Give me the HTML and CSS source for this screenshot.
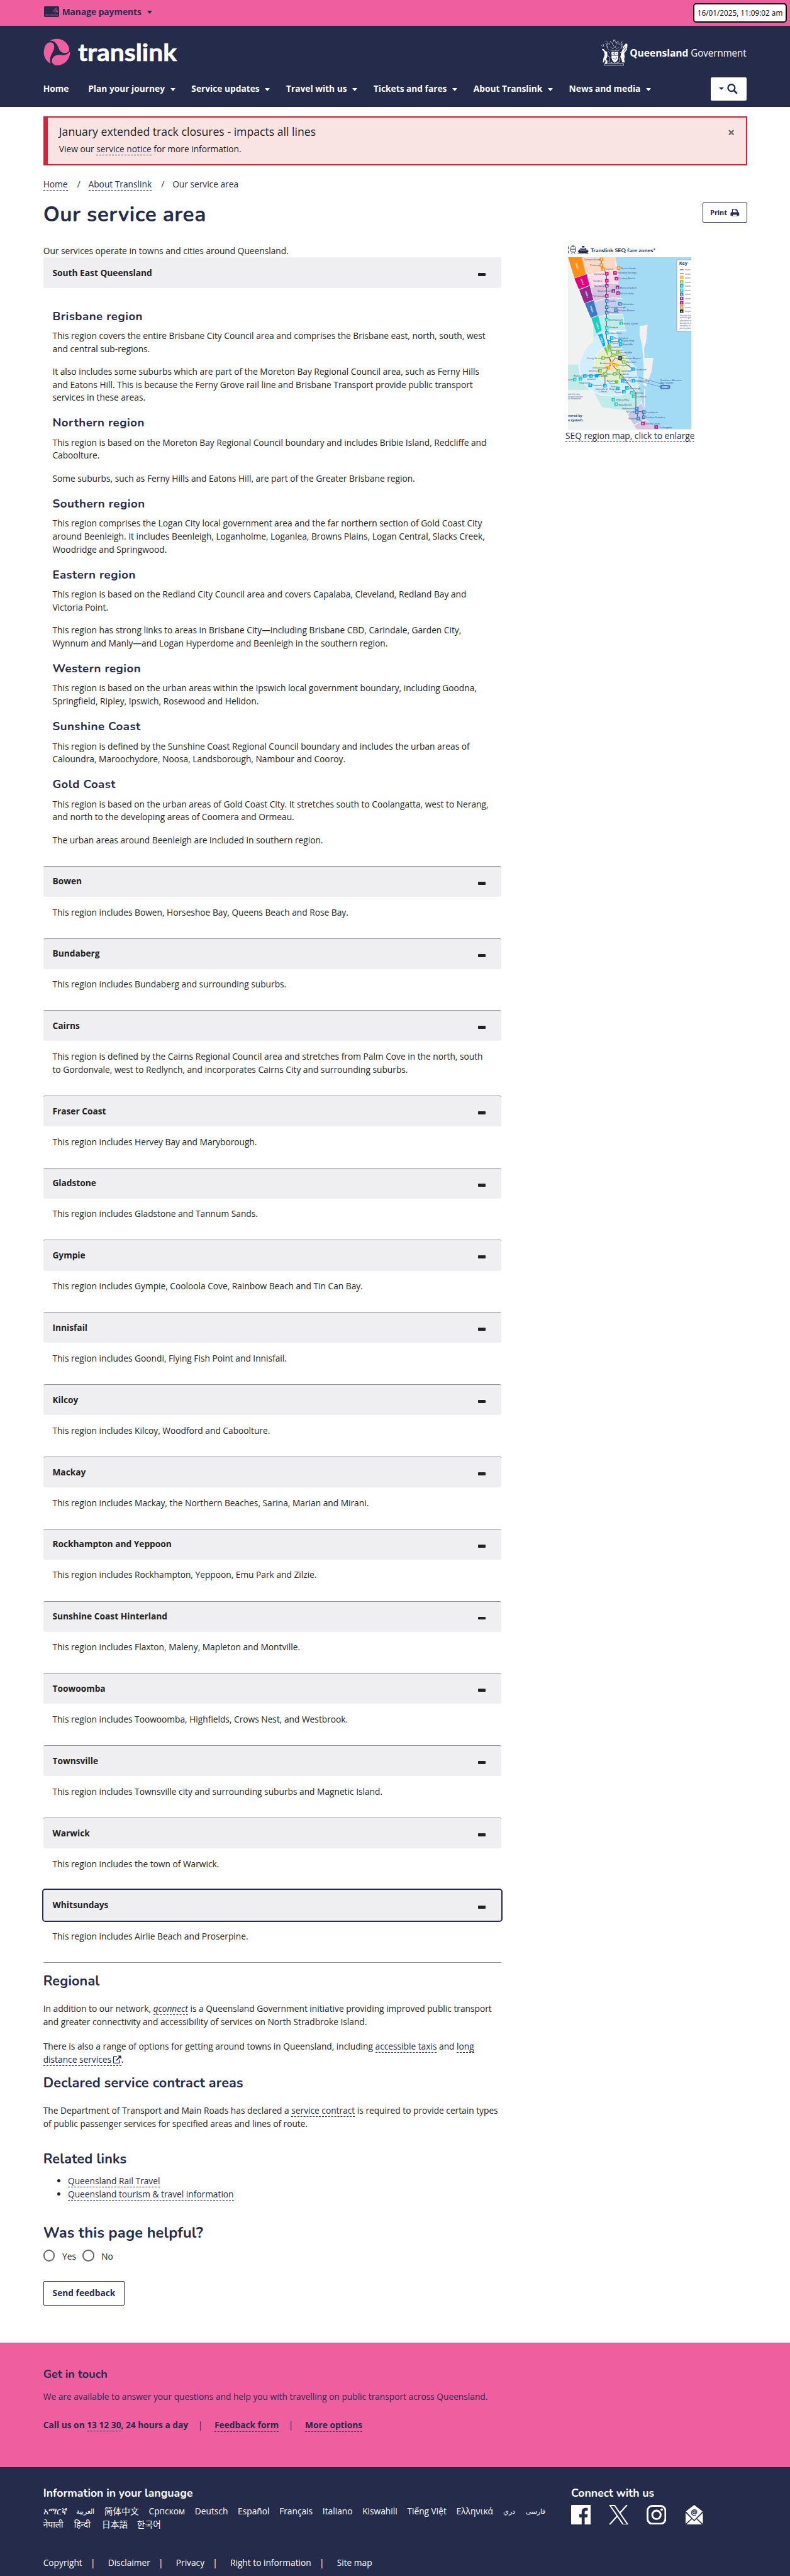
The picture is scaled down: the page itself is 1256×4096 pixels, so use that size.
FILE: index.html
```html
<!DOCTYPE html>
<html lang="en">
<head>
<meta charset="utf-8">
<title>Our service area | Translink</title>
<link rel="stylesheet" href="styles.css">
</head>
<body>
<div class="topbar">
  <div class="wrap topbar-in">
    <svg class="card-icon" viewBox="0 0 25 18"><rect x="0" y="0" width="24.5" height="17.4" rx="2" fill="#252b4b"/><path d="M2 14.2h6.500M9.500 14.200h13" stroke="#ef5fa0" stroke-width=".8"/><path d="M15.500 8.500a4 4 0 0 1 6.500-3M17 9.500a3 3 0 0 1 5-2M19 9.800a2 2 0 0 1 1.500-1.500M17 4.500a5 5 0 0 1 3.500-1.500M20.500 9.800v-1M22 9.800v-2" fill="none" stroke="#ef5fa0" stroke-width=".8"/></svg>
    <span class="manage">Manage payments</span><i class="caret dark"></i>
  </div>
  <div class="clock">16/01/2025, 11:09:02 am</div>
</div>
<header class="header">
  <div class="wrap">
    <div class="brand-row">
      <svg class="logo" viewBox="0 0 220 44">
        <g fill="#ef5fa0">
          <path d="M10.500 3.500C18-.8 31-1 38 8.500C44 17 42.500 22 38 23.300C33 24.500 27.500 23 25 16.500C22.500 9.500 19 3.700 10.500 3.500Z"/>
          <path d="M43.200 21C43.500 33 35 43.300 23.500 43.600C15 44 12.500 38 14.500 33C17 27 24 26.500 29 27C35.500 27.800 40 26 43.200 21Z"/>
          <path d="M11.700 40.800C3 36.500-1 27 1.300 17C3 8.500 9 4.500 14 7C18.500 9.500 18 15.500 16.500 19C14 25 8.500 31 11.700 40.800Z"/>
        </g>
        <text x="56" y="37" textLength="160" lengthAdjust="spacingAndGlyphs" class="logo-text">translink</text>
      </svg>
      <svg class="qld" viewBox="0 0 237 44">
        <g fill="#fff">
          <path d="M2 17l3 .5 3 3.500 2.500 1 .5 7-2 4 2 6-1.500 2H6.500l1.500-3-1-4-2 5H3.500l1-7 2-5-1-5.500-3-3z"/>
          <path d="M43.500 10l-1 8-4.500 6.500 1 5-1 4 1 5.500h-4l-1-4-2-5 1-6 2-5 1-5 5-6z"/>
          <path d="M17.500 22h11v8c0 5-3 8-5.500 9-2.500-1-5.500-4-5.500-9z"/>
        </g>
        <g fill="none" stroke="#252b4b" stroke-width="1"><path d="M17 27.500h12M23 22v5.500M20 31.500l2.500 2.500M26 31l-2 3M19.500 24.500h2M25 24.500h2M36 18l4-5M37.500 21l4.500-6"/></g>
        <g fill="none" stroke="#fff" stroke-width=".8">
          <path d="M6 41h31M5.500 43.400h32M6 41v2.400M37 41v2.400"/>
          <path d="M14 19c-4-2-5-8-3-12l3 3 2-5 3 4 3-7 3 6 3-4 2 6 4-4c2 5 0 11-4 13M16 14l4 3 3-4 3 4 4-3M16 19.500h14M19 9l3 4M27 8l-3 5M8 8l3 2M35 9l-3 2M20 3h5M12 13l-3-1M33 14l3-1M8 4l3 2M34 4l2 2M1 11l3 3M4 9l1 5" stroke-dasharray="1.600 .8"/>
          <path d="M12 28l3 4-1 6 6 2M33 29l-3 4 1 5-6 2M14 39l-4-3M15 24l-3-3M31 24l3-3M22 40l1-1.500 1 1.500" stroke-dasharray="2 .7"/>
        </g>
        <text x="47" y="29.500" textLength="95" lengthAdjust="spacingAndGlyphs" class="qld-b">Queensland</text>
        <text x="146" y="29.500" textLength="90" lengthAdjust="spacingAndGlyphs" class="qld-r">Government</text>
      </svg>
    </div>
    <div class="nav-row">
      <nav class="nav">
        <a class="n0">Home</a>
        <a>Plan your journey<i class="caret"></i></a>
        <a>Service updates<i class="caret"></i></a>
        <a>Travel with us<i class="caret"></i></a>
        <a>Tickets and fares<i class="caret"></i></a>
        <a>About Translink<i class="caret"></i></a>
        <a>News and media<i class="caret"></i></a>
      </nav>
      <div class="search"><i class="caret dark small"></i><svg class="mag" viewBox="0 0 17 17"><circle cx="7" cy="6.800" r="5.500" fill="none" stroke="#252b4b" stroke-width="2.400"/><path d="M11 11l4.300 4.300" stroke="#252b4b" stroke-width="2.800" stroke-linecap="round"/></svg></div>
    </div>
  </div>
</header>
<main class="wrap">
  <div class="alert">
    <div>
      <div class="alert-title">January extended track closures - impacts all lines</div>
      <div>View our <a class="lk">service notice</a> for more information.</div>
    </div>
    <svg class="close" viewBox="0 0 10 10"><path d="M1 1l8 8M9 1l-8 8" stroke="#666" stroke-width="2.400"/></svg>
  </div>
  <div class="crumbs"><a class="lk">Home</a><span>/</span><a class="lk">About Translink</a><span>/</span>Our service area</div>
  <div class="title-row">
    <h1>Our service area</h1>
    <div class="print">Print<svg viewBox="0 0 15 13"><path d="M3.500 6V1h6l2 2v3" fill="none" stroke="#252b4b" stroke-width="1.300"/><path d="M9.300 1v2.500h2.200" fill="none" stroke="#252b4b"/><path d="M2 5.700h11a1.500 1.500 0 0 1 1.500 1.500V11H.5V7.200A1.500 1.500 0 0 1 2 5.700z" fill="#252b4b"/><rect x="3.500" y="9" width="8" height="3.400" fill="#fff" stroke="#252b4b" stroke-width="1.200"/></svg></div>
  </div>
  <div class="cols">
    <div class="left">
      <div>Our services operate in towns and cities around Queensland.</div>
      <section class="acc first"><div class="bar">South East Queensland<i></i></div>
        <div class="body">
          <h3>Brisbane region</h3>
          <p>This region covers the entire Brisbane City Council area and comprises the Brisbane east, north, south, west<br>and central sub-regions.</p>
          <p>It also includes some suburbs which are part of the Moreton Bay Regional Council area, such as Ferny Hills<br>and Eatons Hill. This is because the Ferny Grove rail line and Brisbane Transport provide public transport<br>services in these areas.</p>
          <h3>Northern region</h3>
          <p>This region is based on the Moreton Bay Regional Council boundary and includes Bribie Island, Redcliffe and<br>Caboolture.</p>
          <p>Some suburbs, such as Ferny Hills and Eatons Hill, are part of the Greater Brisbane region.</p>
          <h3>Southern region</h3>
          <p>This region comprises the Logan City local government area and the far northern section of Gold Coast City<br>around Beenleigh. It includes Beenleigh, Loganholme, Loganlea, Browns Plains, Logan Central, Slacks Creek,<br>Woodridge and Springwood.</p>
          <h3>Eastern region</h3>
          <p>This region is based on the Redland City Council area and covers Capalaba, Cleveland, Redland Bay and<br>Victoria Point.</p>
          <p>This region has strong links to areas in Brisbane City—including Brisbane CBD, Carindale, Garden City,<br>Wynnum and Manly—and Logan Hyperdome and Beenleigh in the southern region.</p>
          <h3>Western region</h3>
          <p>This region is based on the urban areas within the Ipswich local government boundary, including Goodna,<br>Springfield, Ripley, Ipswich, Rosewood and Helidon.</p>
          <h3>Sunshine Coast</h3>
          <p>This region is defined by the Sunshine Coast Regional Council boundary and includes the urban areas of<br>Caloundra, Maroochydore, Noosa, Landsborough, Nambour and Cooroy.</p>
          <h3>Gold Coast</h3>
          <p>This region is based on the urban areas of Gold Coast City. It stretches south to Coolangatta, west to Nerang,<br>and north to the developing areas of Coomera and Ormeau.</p>
          <p>The urban areas around Beenleigh are included in southern region.</p>
        </div></section>
      <section class="acc"><div class="bar">Bowen<i></i></div><div class="body"><p>This region includes Bowen, Horseshoe Bay, Queens Beach and Rose Bay.</p></div></section>
      <section class="acc"><div class="bar">Bundaberg<i></i></div><div class="body"><p>This region includes Bundaberg and surrounding suburbs.</p></div></section>
      <section class="acc"><div class="bar">Cairns<i></i></div><div class="body"><p>This region is defined by the Cairns Regional Council area and stretches from Palm Cove in the north, south<br>to Gordonvale, west to Redlynch, and incorporates Cairns City and surrounding suburbs.</p></div></section>
      <section class="acc"><div class="bar">Fraser Coast<i></i></div><div class="body"><p>This region includes Hervey Bay and Maryborough.</p></div></section>
      <section class="acc"><div class="bar">Gladstone<i></i></div><div class="body"><p>This region includes Gladstone and Tannum Sands.</p></div></section>
      <section class="acc"><div class="bar">Gympie<i></i></div><div class="body"><p>This region includes Gympie, Cooloola Cove, Rainbow Beach and Tin Can Bay.</p></div></section>
      <section class="acc"><div class="bar">Innisfail<i></i></div><div class="body"><p>This region includes Goondi, Flying Fish Point and Innisfail.</p></div></section>
      <section class="acc"><div class="bar">Kilcoy<i></i></div><div class="body"><p>This region includes Kilcoy, Woodford and Caboolture.</p></div></section>
      <section class="acc"><div class="bar">Mackay<i></i></div><div class="body"><p>This region includes Mackay, the Northern Beaches, Sarina, Marian and Mirani.</p></div></section>
      <section class="acc"><div class="bar">Rockhampton and Yeppoon<i></i></div><div class="body"><p>This region includes Rockhampton, Yeppoon, Emu Park and Zilzie.</p></div></section>
      <section class="acc"><div class="bar">Sunshine Coast Hinterland<i></i></div><div class="body"><p>This region includes Flaxton, Maleny, Mapleton and Montville.</p></div></section>
      <section class="acc"><div class="bar">Toowoomba<i></i></div><div class="body"><p>This region includes Toowoomba, Highfields, Crows Nest, and Westbrook.</p></div></section>
      <section class="acc"><div class="bar">Townsville<i></i></div><div class="body"><p>This region includes Townsville city and surrounding suburbs and Magnetic Island.</p></div></section>
      <section class="acc"><div class="bar">Warwick<i></i></div><div class="body"><p>This region includes the town of Warwick.</p></div></section>
      <section class="acc focus"><div class="bar">Whitsundays<i></i></div><div class="body"><p>This region includes Airlie Beach and Proserpine.</p></div></section>
      <div class="rule"></div>
      <h2 class="h-reg">Regional</h2>
      <div class="para">In addition to our network, <a class="lk"><em>qconnect</em></a> is a Queensland Government initiative providing improved public transport<br>and greater connectivity and accessibility of services on North Stradbroke Island.</div>
      <div class="para">There is also a range of options for getting around towns in Queensland, including <a class="lk">accessible taxis</a> and <a class="lk">long</a><br><a class="lk">distance services<svg class="ext" viewBox="0 0 14 14"><path d="M7 2H2.500A1 1 0 0 0 1.500 3v8.500a1 1 0 0 0 1 1h8a1 1 0 0 0 1-1V7" fill="none" stroke="#252b4b" stroke-width="1.300"/><path d="M6 8.500l6-6" stroke="#252b4b" stroke-width="1.800"/><path d="M8.500.5H14V6z" fill="#252b4b"/></svg></a>.</div>
      <h2 class="h-dec">Declared service contract areas</h2>
      <div class="para">The Department of Transport and Main Roads has declared a <a class="lk">service contract</a> is required to provide certain types<br>of public passenger services for specified areas and lines of route.</div>
      <h2 class="h-rel">Related links</h2>
      <ul><li><a class="lk">Queensland Rail Travel</a></li><li><a class="lk">Queensland tourism &amp; travel information</a></li></ul>
      <h2 class="h-was">Was this page helpful?</h2>
      <div class="radios"><i></i><span>Yes</span><i></i><span>No</span></div>
      <div class="send">Send feedback</div>
    </div>
    <aside class="right">
      <svg class="map" viewBox="60 50 600 898">
        <g fill="none" stroke="#252b4b" stroke-width="3">
          <path d="M62 58v14M62 80v12"/>
          <rect x="74" y="60" width="22" height="26" rx="5"/><path d="M74 72h22M80 56h10M76 94l4-7M94 94l-4-7"/>
        </g>
        <g fill="#252b4b"><path d="M120 66h28v8h8v8H112v-8h8zM128 56h12v8h-12zM107 80h54l-6 10H112z"/><path d="M107 93q7-4 13 0t13 0 13 0 14 0" fill="none" stroke="#252b4b" stroke-width="3"/></g>
        <path d="M125 70h18M118 77h32" stroke="#fff" stroke-width="2.500"/>
        <text x="170" y="87" textLength="316" lengthAdjust="spacingAndGlyphs" class="map-title">Translink SEQ fare zones*</text>
        <svg x="60" y="111" width="600" height="837" viewBox="60 111 600 837">
          <rect x="60" y="111" width="600" height="837" fill="#a3dbf5"/>
          <path d="M60 111H290L305 180 303 300 290 380 330 400 340 470 295 470 315 540 320 600 350 640 380 660 400 720 410 780 430 850 440 900 480 948H60z" fill="#f0f2f2"/>
          <path d="M120 111H292L290 150 304 190Q220 175 156 195z" fill="#fdd9c5"/>
          <path d="M156 195Q225 175 303 190L305 240Q240 232 171 253z" fill="#fbdce9"/>
          <path d="M171 253Q240 232 305 240L305 316Q245 306 186 326z" fill="#d9c3e0"/>
          <path d="M186 326Q245 306 303 316L325 345 325 392Q260 384 207 404z" fill="#c2d0ea"/>
          <path d="M183 410Q250 384 328 392L330 440 345 468Q280 462 222 486L183 500z" fill="#c0ebe8"/>
          <path d="M60 633H110Q120 760 240 785 330 795 390 750L415 770 417 820 370 860 225 840 180 755 60 757z" fill="#c0ebe8"/>
          <path d="M183 500Q240 468 295 478L320 545 350 600 395 650 400 745Q330 795 240 785 120 760 115 650 130 560 183 520z" fill="#d3eefb"/>
          <circle cx="270" cy="630" r="83" fill="#e2f1c9"/><circle cx="271" cy="630" r="36" fill="#fbe3c2"/>
          <path d="M350 875L417 820 430 850 436 900 380 925z" fill="#c5cbe7"/><path d="M380 928L436 900 480 948H395z" fill="#dcc3e2"/>
          <g fill="none" stroke="#fff" stroke-width="3"><path d="M150 208Q210 172 304 178M163 262Q230 230 305 238M177 334Q245 300 325 312M198 404Q265 382 328 390M213 484Q260 462 345 470M115 640Q115 760 240 785 350 795 417 720M187 630A83 83 0 0 0 353 650M187 630Q190 570 240 552M380 928L440 898M352 872L417 820"/></g>
          <path d="M408 446L447 440 440 520 430 555 432 600H425L420 540 408 490zM425 600L475 600 465 670 440 740 425 730 428 640zM430 750h6l-2 90h-4z" fill="#f0f2f2"/>
          <path d="M60 111H126L147 193 91 212z" fill="#ff9015"/><path d="M91 214L151 194 164 248 113 267z" fill="#e6007e"/><path d="M115 270L166 250 183 318 140 335z" fill="#92278f"/><path d="M142 336L185 321 204 392 171 406z" fill="#3a7bc8"/><path d="M174 408L207 396 224 466 199 482z" fill="#16cfc5"/><path d="M206 488L227 482 242 540 231 547z" fill="#00aeef"/><path d="M234 552L246 547 258 598z" fill="#7ac943"/>
          <g fill="none" stroke="#555" stroke-width="3"><path d="M222 123V150L248 192V505L262 545 275 585 262 600 270 627 240 678 140 690M240 678V735M270 627L258 655M231 600H262L270 627L390 770V850L402 895 424 920M390 862H428V888M270 627L290 600 330 620 375 655M262 522H312M270 627H290"/></g>
          <path d="M405 695L525 730M412 715L525 745" stroke="#3a7bc8" stroke-width="2"/><rect x="507" y="732" width="50" height="20" rx="10" fill="#3a7bc8"/>
          <g class="mk">
            <g fill="#ff9015"><rect x="214" y="113"/><rect x="214" y="141"/><rect x="222" y="160"/><rect x="297" y="155"/></g>
            <g fill="#e6007e"><rect x="240" y="183"/><rect x="280" y="179"/><rect x="240" y="217"/><rect x="287" y="206"/><rect x="480" y="928"/></g>
            <g fill="#92278f"><rect x="240" y="241"/><rect x="292" y="249"/><rect x="272" y="267"/><rect x="295" y="277"/><rect x="240" y="291"/><rect x="416" y="911"/></g>
            <g fill="#3a7bc8"><rect x="240" y="315"/><rect x="304" y="329"/><rect x="240" y="345"/><rect x="284" y="360"/><rect x="240" y="371"/><rect x="386" y="838"/><rect x="386" y="855"/><rect x="420" y="855"/><rect x="420" y="880"/><rect x="393" y="887"/></g>
            <g fill="#16cfc5"><rect x="240" y="405"/><rect x="310" y="424"/><rect x="240" y="445"/><rect x="84" y="697"/><rect x="112" y="695"/><rect x="361" y="761"/><rect x="371" y="779"/><rect x="272" y="795"/><rect x="285" y="817"/></g>
            <g fill="#00aeef"><rect x="240" y="469"/><rect x="264" y="495"/><rect x="252" y="513"/><rect x="304" y="509"/><rect x="307" y="526"/><rect x="367" y="647"/><rect x="133" y="680"/><rect x="163" y="680"/><rect x="190" y="679"/><rect x="159" y="725"/><rect x="231" y="727"/><rect x="293" y="740"/><rect x="338" y="738"/><rect x="323" y="756"/><rect x="317" y="704"/><rect x="369" y="703"/></g>
            <g fill="#7ac943"><rect x="251" y="535"/><rect x="252" y="552"/><rect x="293" y="566"/><rect x="270" y="578"/><rect x="222" y="592"/><rect x="322" y="612"/><rect x="207" y="655"/><rect x="297" y="655"/><rect x="231" y="669"/><rect x="279" y="670"/><rect x="308" y="684"/><rect x="288" y="709"/></g>
            <g fill="#fbb829"><rect x="262" y="618"/><rect x="283" y="628"/><rect x="247" y="640"/></g>
            <rect x="305" y="592" fill="#222"/>
          </g>
          <g class="mn">
            <text x="219" y="127">8</text><text x="219" y="155">8</text><text x="227" y="174">8</text><text x="302" y="169">8</text><text x="245" y="197">7</text><text x="285" y="193">7</text><text x="245" y="231">7</text><text x="292" y="220">7</text><text x="485" y="942">7</text><text x="245" y="255">6</text><text x="297" y="263">6</text><text x="277" y="281">6</text><text x="300" y="291">6</text><text x="245" y="305">6</text><text x="421" y="925">6</text><text x="245" y="329">5</text><text x="309" y="343">5</text><text x="245" y="359">5</text><text x="289" y="374">5</text><text x="245" y="385">5</text><text x="391" y="852">5</text><text x="391" y="869">5</text><text x="425" y="869">5</text><text x="425" y="894">5</text><text x="398" y="901">5</text><text x="245" y="419">4</text><text x="315" y="438">4</text><text x="245" y="459">4</text><text x="89" y="711">4</text><text x="117" y="709">4</text><text x="366" y="775">4</text><text x="376" y="793">4</text><text x="277" y="809">4</text><text x="290" y="831">4</text><text x="245" y="483">3</text><text x="269" y="509">3</text><text x="257" y="527">3</text><text x="309" y="523">3</text><text x="312" y="540">3</text><text x="372" y="661">3</text><text x="138" y="694">3</text><text x="168" y="694">3</text><text x="164" y="739">3</text><text x="236" y="741">3</text><text x="298" y="754">3</text><text x="343" y="752">3</text><text x="328" y="770">3</text><text x="322" y="718">3</text><text x="374" y="717">3</text><text x="257" y="566">2</text><text x="298" y="580">2</text><text x="275" y="592">2</text><text x="227" y="606">2</text><text x="327" y="626">2</text><text x="212" y="669">2</text><text x="302" y="669">2</text><text x="236" y="683">2</text><text x="284" y="684">2</text><text x="313" y="698">2</text><text x="267" y="632">1</text><text x="288" y="642">1</text><text x="309" y="606">✕</text>
          </g>
          <g class="ml">
            <text x="138" y="127">Gympie North</text><text x="167" y="155">Pomona</text><text x="241" y="173">Cooroy</text><text x="316" y="168">Noosa Heads</text><text x="188" y="196">Eumundi</text><text x="300" y="192">Peregian Springs</text><text x="306" y="219">Coolum Beach</text><text x="182" y="230">Yandina</text><text x="186" y="255">Nambour</text><text x="312" y="263">Maroochydore</text><text x="204" y="280">Sippy Downs</text><text x="314" y="291">Mooloolaba</text><text x="178" y="304">Palmwoods</text><text x="261" y="328">Eudlo</text><text x="322" y="343">Caloundra</text><text x="261" y="358">Landsborough</text><text x="302" y="374">Pelican Waters</text><text x="259" y="384">Beerwah</text><text x="259" y="419">Beerburrum</text><text x="330" y="438">Bribie Island</text><text x="259" y="458">Elimbah</text><text x="259" y="483">Caboolture</text><text x="284" y="508">North Lakes</text><text x="322" y="522">Kippa-Ring</text><text x="327" y="539">Redcliffe</text><text x="272" y="534">Petrie</text><text x="270" y="550">Lawnton</text><text x="270" y="566">Strathpine</text><text x="311" y="579">Shorncliffe</text><text x="288" y="592">Northgate</text><text x="155" y="605">Ferny Grove</text><text x="323" y="606">Brisbane Airport</text><text x="341" y="625">Wynnum</text><text x="215" y="630">Brisbane</text><text x="301" y="641">Coorparoo</text><text x="180" y="653">Indooroopilly</text><text x="386" y="661">Cleveland</text><text x="160" y="667">Kenmore</text><text x="315" y="669">Capalaba</text><text x="249" y="682">Darra</text><text x="294" y="684">Sunnybank</text><text x="87" y="692">Walloon</text><text x="204" y="693">Redbank</text><text x="152" y="707">Ipswich</text><text x="327" y="698">Springwood</text><text x="60" y="710">ood</text><text x="112" y="725">Thagoona</text><text x="249" y="717">Browns</text><text x="257" y="729">Plains</text><text x="336" y="713">Daisy</text><text x="336" y="725">Hill</text><text x="387" y="717">Redland Bay</text><text x="178" y="739">Yamanto</text><text x="193" y="757">Springfield</text><text x="210" y="769">Central</text><text x="267" y="745">Park</text><text x="261" y="757">Ridge</text><text x="358" y="752">Beenleigh</text><text x="286" y="770">Yatala</text><text x="381" y="775">Ormeau</text><text x="390" y="792">Coomera</text><text x="292" y="809">Jimboomba</text><text x="306" y="832">Beaudesert</text><text x="323" y="851">Helensvale</text><text x="342" y="867">Nerang</text><text x="440" y="868">Southport</text><text x="440" y="894">Surfers Paradise</text><text x="354" y="900">Robina</text><text x="436" y="924">Varsity Lakes</text><text x="500" y="942">Coolangatta</text><text x="509" y="713">Southern Moreton</text><text x="509" y="727">Bay Islands</text>
          </g>
          <g class="mnote"><text x="60" y="782">mbs. For more</text><text x="60" y="792">the zones and bus</text><text x="60" y="802">ou/Toowoomba</text></g>
          <g class="mbold"><text x="60" y="889">vered by</text><text x="60" y="910">e system.</text></g>
          <g class="mz"><text transform="translate(96 140) rotate(72)">ZONE 8</text><text transform="translate(121 217) rotate(72)">ZONE 7</text><text transform="translate(143 278) rotate(72)">ZONE 6</text><text transform="translate(167 349) rotate(72)">ZONE 5</text><text transform="translate(195 430) rotate(72)">ZONE 4</text><text transform="translate(216 498) rotate(72)">ZONE 3</text><text x="516" y="746">ZONE 5</text></g>
          <path d="M589 124H670V470H589z" fill="#fff" stroke="#888" stroke-width="2"/>
          <text x="600" y="149" class="mkey">Key</text>
          <path d="M604 172h18M604 191h18" stroke="#444" stroke-width="3"/>
          <g class="mk"><rect x="604" y="201" fill="#fbb829"/><rect x="604" y="222" fill="#7ac943"/><rect x="604" y="242" fill="#00aeef"/><rect x="604" y="263" fill="#16cfc5"/><rect x="604" y="283" fill="#3a7bc8"/><rect x="604" y="303" fill="#92278f"/><rect x="604" y="324" fill="#e6007e"/><rect x="604" y="344" fill="#ff9015"/><rect x="604" y="365" fill="#222"/></g>
          <g class="mn"><text x="609" y="215">1</text><text x="609" y="236">2</text><text x="609" y="256">3</text><text x="609" y="277">4</text><text x="609" y="297">5</text><text x="609" y="317">6</text><text x="609" y="338">7</text><text x="609" y="358">8</text><text x="608" y="379">✕</text></g>
          <g class="ml"><text x="629" y="176">train line</text><text x="629" y="196">train line</text><text x="629" y="215">zone 1</text><text x="629" y="235">zone 2</text><text x="629" y="256">zone 3</text><text x="629" y="276">zone 4</text><text x="629" y="296">zone 5</text><text x="629" y="317">zone 6</text><text x="629" y="337">zone 7</text><text x="629" y="358">zone 8</text><text x="629" y="378">airport</text></g>
          <g class="mnote"><text x="603" y="397">This map is to be</text><text x="603" y="409">used as a guide</text><text x="603" y="422">information on</text><text x="603" y="435">boundaries, plus</text><text x="603" y="447">timetables or use</text><text x="603" y="460">journey planner</text></g>
        </svg>
      </svg>
      <div><a class="lk">SEQ region map, click to enlarge</a></div>
    </aside>
  </div>
</main>
<section class="touch"><div class="wrap">
  <div class="touch-h">Get in touch</div>
  <div class="touch-p">We are available to answer your questions and help you with travelling on public transport across Queensland.</div>
  <div class="touch-n"><span>Call us on <a class="lk">13 12 30</a>, 24 hours a day</span><b>|</b><a class="lk">Feedback form</a><b>|</b><a class="lk">More options</a></div>
</div></section>
<footer class="foot"><div class="wrap">
  <div class="foot-top">
    <div class="langs">
      <h4>Information in your language</h4>
      <div class="lrow"><span class="w37">አማርኛ</span><span class="w30 ar">العربية</span><span class="w56">简体中文</span><span>Српском</span><span>Deutsch</span><span>Español</span><span>Français</span><span>Italiano</span><span>Kiswahili</span><span>Tiếng Việt</span><span>Ελληνικά</span><span class="w21 ar">دري</span><span class="w31 ar">فارسی</span></div>
      <div class="lrow"><span class="w34">नेपाली</span><span class="w29">हिन्दी</span><span class="w41">日本語</span><span class="w40">한국어</span></div>
    </div>
    <div class="social">
      <h4>Connect with us</h4>
      <div class="icons">
        <svg viewBox="0 0 32 32"><path fill="#fff" d="M1.500 0h29A1.500 1.500 0 0 1 32 1.500v29a1.500 1.500 0 0 1-1.500 1.500H22V20h4.200l.7-5H22v-3c0-1.600.6-2.500 2.600-2.500H27V5.100c-.5-.1-2-.2-3.700-.2-3.800 0-6.200 2.300-6.200 6.300V15H13v5h4.100v12H1.500A1.500 1.500 0 0 1 0 30.500v-29A1.500 1.500 0 0 1 1.500 0z"/></svg>
        <svg viewBox="0 0 32 32"><path fill="none" stroke="#fff" stroke-width="2" d="M2 1h7.500L30.500 31.500H23z"/><path fill="none" stroke="#fff" stroke-width="2.200" d="M29.500 0L17.500 13.500M13.500 18L1 32"/></svg>
        <svg viewBox="0 0 32 32"><g fill="none" stroke="#fff" stroke-width="3"><rect x="1.500" y="1.500" width="29" height="29" rx="8"/><circle cx="16" cy="16" r="6.800"/></g><circle cx="24.500" cy="7.500" r="2" fill="#fff"/></svg>
        <svg viewBox="0 0 32 32"><path d="M16 0L29.500 10.500 16 24.500 2.500 10.500z" fill="#fff"/><path d="M2 12.700L11.300 22 2 30.500zM30 12.700L20.700 22 30 30.500zM12.300 23L16 26.500 19.700 23 29 32H3z" fill="#fff"/><text x="10.500" y="16" class="at">@</text></svg>
      </div>
    </div>
  </div>
  <div class="legal"><a>Copyright</a><b>|</b><a>Disclaimer</a><b>|</b><a>Privacy</a><b>|</b><a>Right to information</a><b>|</b><a>Site map</a></div>
</div></footer>
</body>
</html>
```
FILE: styles.css
```css
/* 1rem is ten layout units */
html { font-size: 9.8155px; }
* { box-sizing: border-box; }
body { margin: 0; background: #fff; color: #222; font: 1.4rem/2.1rem "Open Sans", "Noto Sans", "Noto Sans CJK SC", "Noto Sans CJK KR", sans-serif; overflow-x: hidden; }
p, h1, h2, h3, h4, ul { margin: 0; padding: 0; }
svg { display: block; }
.wrap { margin-left: 7rem; width: 114rem; }
.lk { color: #252b4b; border-bottom: 1px dashed #252b4b; }
.caret { display: inline-block; width: 0; height: 0; border: .5rem solid transparent; border-top: .6rem solid #fff; border-bottom: 0; margin-left: .9rem; vertical-align: .1rem; }
.caret.dark { border-top-color: #252b4b; }
.caret.small { border-width: .5rem .45rem 0; margin: 0; }

.topbar { height: 4.2rem; background: #ef5fa0; position: relative; }
.topbar-in { display: flex; align-items: center; height: 3.9rem; color: #252b4b; }
.card-icon { width: 2.5rem; height: 1.8rem; margin-left: .15rem; margin-right: .4rem; }
.manage { font-weight: 700; }
.clock { position: absolute; right: .5rem; top: .5rem; width: 15.2rem; height: 3.2rem; border: 2px solid #000; border-radius: .5rem; background: #fff; color: #000; font-size: 1.2rem; line-height: 2.8rem; text-align: center; white-space: nowrap; }

.header { background: #252b4b; height: 13.1rem; padding-top: 2rem; color: #fff; }
.brand-row { display: flex; justify-content: space-between; height: 4.4rem; }
.logo { width: 22rem; height: 4.4rem; overflow: visible; }
.logo-text { font: 700 39.5px Lato, sans-serif; fill: #fff; stroke: #fff; stroke-width: .7; stroke-linejoin: round; }
.qld { width: 23.7rem; height: 4.4rem; overflow: visible; }
.qld-b { font: 700 16.4px "Open Sans", sans-serif; fill: #fff; }
.qld-r { font: 400 16.4px "Open Sans", sans-serif; fill: #fff; }
.nav-row { display: flex; justify-content: space-between; align-items: center; height: 3.8rem; margin-top: 1.9rem; }
.nav { display: flex; gap: 2.6rem; font-weight: 700; white-space: nowrap; }
.n0 { margin-right: .55rem; }
.search { width: 5.8rem; height: 3.8rem; margin-right: .1rem; background: #fff; border-radius: 2px; display: flex; align-items: center; justify-content: center; gap: .5rem; }
.mag { width: 1.7rem; height: 1.7rem; }

.alert { margin-top: 1.5rem; height: 8rem; border: 2px solid #e31b38; border-left-width: .8rem; background: #f9e4e3; padding: 1rem 1.85rem 0 1.85rem; display: flex; justify-content: space-between; }
.alert-title { font-size: 1.8rem; line-height: 2.7rem; margin-bottom: .45rem; }
.close { width: .95rem; height: .95rem; margin-top: 1rem; }
.crumbs { margin-top: 2rem; color: #252b4b; }
.crumbs span { margin: 0 1.3rem 0 1.55rem; }
h1, h2, h3, h4, .touch-h { font-family: Nunito, Lato, "Open Sans", sans-serif; color: #252b4b; font-weight: 700; white-space: nowrap; }
.title-row { display: flex; justify-content: space-between; height: 4rem; margin: 1.65rem 0 3.05rem; }
h1 { font-size: 3.4rem; line-height: 4rem; letter-spacing: .045rem; padding-top: .25rem; }
.print { width: 7.2rem; height: 3.3rem; margin-top: .25rem; border: 1px solid #252b4b; border-radius: 2px; color: #252b4b; font-weight: 700; font-size: 1.1rem; display: flex; align-items: center; justify-content: center; gap: .5rem; }
.print svg { width: 1.5rem; height: 1.3rem; }
.cols { display: flex; height: 339.9rem; }
.left { width: 74.2rem; white-space: nowrap; }
.right { margin-left: 10.4rem; white-space: nowrap; }
.bar { height: 5rem; background: #efeff1; border-top: 1px solid #929296; border-radius: 3px; font-weight: 700; padding: 0 2.5rem 0 1.5rem; display: flex; align-items: center; justify-content: space-between; line-height: 2.1rem; }
.first .bar { border-top-color: #efeff1; }
.bar i { width: 1.3rem; height: .5rem; background: #222; border-radius: 1px; margin-top: .5rem; }
.body { padding: 1.5rem 1.5rem; }
.body p { margin-bottom: 1.6rem; }
.body h3 { font-size: 1.9rem; line-height: 2.8rem; letter-spacing: .05rem; margin: 1.6rem 0 .7rem; padding-top: .1rem; }
.focus .bar { outline: 2px solid #252b4b; border-top-color: #efeff1; }
.rule { border-top: 1px solid #929296; }
.left h2 { font-size: 2.2rem; line-height: 2.6rem; letter-spacing: .015rem; }
.left .h-reg { margin-top: 1.8rem; margin-bottom: 2.1rem; }
.para { margin-bottom: 1.9rem; }
.left .h-dec { margin: -.45rem 0 2.15rem; }
.left .h-rel { margin: 3.45rem 0 1.15rem; }
.left .h-was { font-size: 2.4rem; line-height: 3rem; margin: 3.7rem 0 1.2rem; }
.ext { display: inline-block; width: 1.4rem; height: 1.4rem; margin-left: .2rem; vertical-align: -.15rem; }
ul { padding-left: 4rem; }
.radios { display: flex; align-items: center; height: 1.9rem; }
.radios i { width: 1.9rem; height: 1.9rem; border: 2px solid #666; border-radius: 50%; }
.radios span { margin: .5rem 1rem 0 1.2rem; }
.send { width: 13.2rem; height: 4rem; margin-top: 3.2rem; border: 1px solid #252b4b; border-radius: 2px; color: #252b4b; font-weight: 700; display: flex; align-items: center; justify-content: center; }

.map { width: 20rem; height: 29.93rem; margin: .07rem 0 0 .4rem; }
.map-title { font: 700 25px Lato, sans-serif; fill: #252b4b; }
.mk rect { width: 17px; height: 17px; }
.mn { font: 700 13px "Open Sans", sans-serif; fill: #fff; }
.ml { font: 400 12px "Open Sans", sans-serif; fill: #2c4a80; }
.mnote { font: italic 9px "Open Sans", sans-serif; fill: #2c4a80; }
.mbold { font: 700 16px "Open Sans", sans-serif; fill: #2c4a80; }
.mz { font: 700 9px "Open Sans", sans-serif; fill: #fff; }
.mkey { font: 700 22px "Open Sans", sans-serif; fill: #204a80; }

.touch { background: #ef5fa0; height: 20.2rem; padding-top: 4rem; color: #252b4b; white-space: nowrap; }
.touch-h { font-size: 1.85rem; line-height: 2.4rem; }
.touch-p { margin-top: 1.4rem; }
.touch-n { margin-top: 2.4rem; font-weight: 700; display: flex; }
.touch-n b { font-weight: 400; margin: 0 1.9rem 0 1.6rem; }
.foot { background: #252b4b; height: 17.7rem; padding-top: 3.1rem; color: #fff; white-space: nowrap; }
.foot-top { display: flex; }
.langs { width: 85.5rem; }
h4 { color: #fff; font-size: 1.8rem; line-height: 2.2rem; margin-bottom: .8rem; }
.lrow { display: flex; gap: 1.6rem; height: 2.1rem; }
.ar { font-size: 1.1rem; }
.w21 { width: 2.1rem; } .w29 { width: 2.9rem; } .w30 { width: 3rem; } .w31 { width: 3.1rem; } .w34 { width: 3.4rem; } .w37 { width: 3.7rem; } .w40 { width: 4rem; } .w41 { width: 4.1rem; } .w56 { width: 5.6rem; }
.icons { display: flex; gap: 2.9rem; }
.icons svg { width: 3.2rem; height: 3.2rem; }
.at { font: 700 12px "Open Sans", sans-serif; fill: #252b4b; }
.legal { display: flex; margin-top: 4.2rem; }
.legal b { font-weight: 400; margin: 0 2.05rem 0 1.35rem; }
```
